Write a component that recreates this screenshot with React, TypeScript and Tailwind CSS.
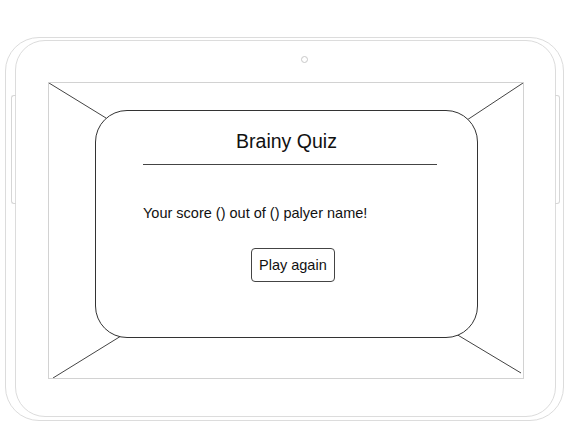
import React from "react";

const diagonals = [
  { x1: 0, y1: 0, x2: 57, y2: 35 },
  { x1: 474, y1: 0, x2: 418, y2: 37 },
  { x1: 4, y1: 295, x2: 72, y2: 253 },
  { x1: 472, y1: 290, x2: 407, y2: 251 },
];

function SideButton({ side }: { side: "left" | "right" }) {
  return (
    <div
      className={
        side === "left"
          ? "absolute left-[5px] top-[57px] h-[109px] w-[5px] rounded-l-[3px] border border-r-0 border-[#d6d6d6]"
          : "absolute right-[3px] top-[57px] h-[109px] w-[5px] rounded-r-[3px] border border-l-0 border-[#d6d6d6]"
      }
    />
  );
}

function QuizCard() {
  return (
    <div className="relative ml-[46px] mt-[27px] flex h-[228px] w-[383px] flex-col rounded-[32px] border border-[#333] bg-white">
      <h1 className="mt-[18px] text-center text-[19.5px] leading-[24px] text-[#111]">
        Brainy Quiz
      </h1>
      <div className="ml-[47px] mt-[11px] h-px w-[294px] bg-[#444]" />
      <p className="ml-[47px] mt-[38px] text-[14.5px] leading-[20px] text-[#111]">
        Your score () out of () palyer name!
      </p>
      <div className="ml-[155px] mt-[25px] flex">
        <button className="rounded-[4px] border border-[#444] bg-white px-[7px] py-[6px] text-[14.5px] leading-[20px] text-[#111]">
          Play again
        </button>
      </div>
    </div>
  );
}

export default function App() {
  return (
    <div
      className="h-[440px] w-[576px] overflow-hidden bg-white pl-[5px] pt-[37px]"
      style={{ fontFamily: '"Liberation Sans", Arial, sans-serif' }}
    >
      <div className="relative h-[384px] w-[559px] rounded-[34px] border border-[#dcdcdc] pl-[9px] pt-[2px]">
        <SideButton side="left" />
        <SideButton side="right" />
        <div className="flex h-[377px] w-[541px] flex-col rounded-[30px] border border-[#dcdcdc]">
          <div className="ml-[285px] mt-[15px] h-[7px] w-[7px] rounded-full border border-[#c8c8c8]" />
          <div className="relative ml-[32px] mt-[19px] h-[297px] w-[476px] border border-[#d2d2d2]">
            <svg
              className="absolute inset-0"
              width="474"
              height="295"
              viewBox="0 0 474 295"
            >
              {diagonals.map((d, i) => (
                <line
                  key={i}
                  x1={d.x1}
                  y1={d.y1}
                  x2={d.x2}
                  y2={d.y2}
                  stroke="#444"
                  strokeWidth="1"
                />
              ))}
            </svg>
            <QuizCard />
          </div>
        </div>
      </div>
    </div>
  );
}
